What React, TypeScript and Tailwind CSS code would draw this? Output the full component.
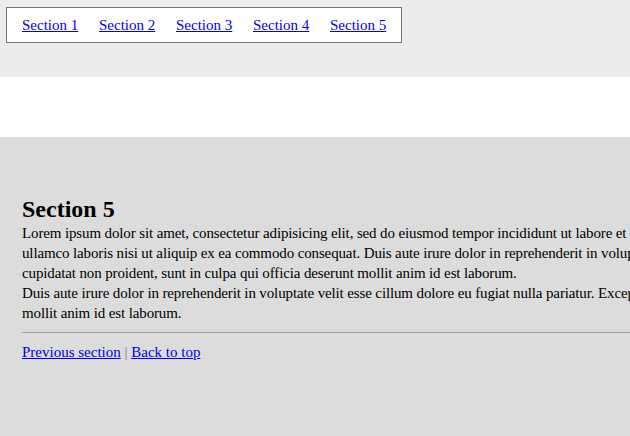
const lorem1 =
  'Lorem ipsum dolor sit amet, consectetur adipisicing elit, sed do eiusmod tempor incididunt ut labore et dolore magna aliqua. Ut enim ad minim veniam, quis nostrud exercitation ullamco laboris nisi ut aliquip ex ea commodo consequat. Duis aute irure dolor in reprehenderit in voluptate velit esse cillum dolore eu fugiat nulla pariatur. Excepteur sint occaecat cupidatat non proident, sunt in culpa qui officia deserunt mollit anim id est laborum.';
const lorem2 =
  'Duis aute irure dolor in reprehenderit in voluptate velit esse cillum dolore eu fugiat nulla pariatur. Excepteur sint occaecat cupidatat non proident, sunt in culpa qui officia deserunt mollit anim id est laborum.';

const sections = ['Section 1', 'Section 2', 'Section 3', 'Section 4', 'Section 5'];

export default function App() {
  return (
    <div className="h-screen overflow-hidden flex flex-col font-['Liberation_Serif',serif] text-black">
      {/* top nav band */}
      <header className="h-[77px] shrink-0 bg-[#ececec] pt-[7px] pl-[6px]">
        <nav className="w-fit bg-white border border-[#777777] px-[15px] py-2">
          <ul className="flex gap-[20.75px] text-[15px] leading-[18px]">
            {sections.map((s) => (
              <li key={s}>
                <a href="#" className="text-[#0000ee] underline">
                  {s}
                </a>
              </li>
            ))}
          </ul>
        </nav>
      </header>

      {/* spacer */}
      <div className="h-[60px] shrink-0 bg-white" />

      {/* section */}
      <main className="flex-1 bg-[#dcdcdc] pt-[58px] pl-[22px]">
        <div className="w-[1070px]">
          <h2 className="text-[24px] leading-[28px] font-bold">Section 5</h2>
          <p className="text-[15px] leading-[20px] tracking-[-0.13px]">{lorem1}</p>
          <p className="text-[15px] leading-[20px] tracking-[-0.13px]">{lorem2}</p>
          <hr className="mt-[9px] border-0 border-t border-[#a0a0a0]" />
          <p className="mt-[9px] text-[15px] leading-[20px]">
            <a href="#" className="text-[#0000ee] underline">
              Previous section
            </a>{' '}
            <span className="text-[#808080]">|</span>{' '}
            <a href="#" className="text-[#0000ee] underline">
              Back to top
            </a>
          </p>
        </div>
      </main>
    </div>
  );
}
